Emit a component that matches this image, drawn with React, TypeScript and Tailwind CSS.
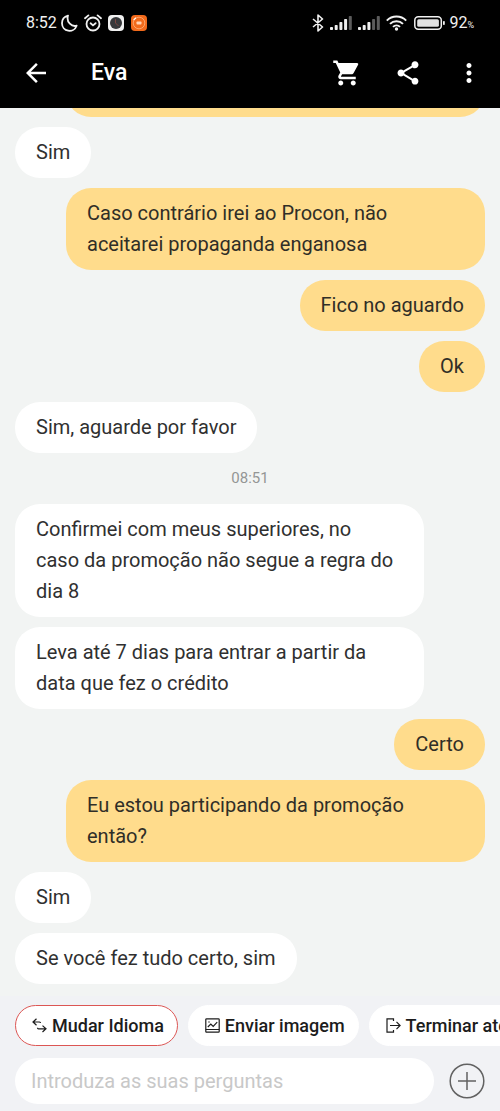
import React from "react";
import { MdArrowBack, MdMoreVert, MdShare, MdShoppingCart } from "react-icons/md";

type Message = {
  from: "me" | "agent" | "time";
  text: string;
};

const messages: Message[] = [
  { from: "agent", text: "Sim" },
  { from: "me", text: "Caso contrário irei ao Procon, não aceitarei propaganda enganosa" },
  { from: "me", text: "Fico no aguardo" },
  { from: "me", text: "Ok" },
  { from: "agent", text: "Sim, aguarde por favor" },
  { from: "time", text: "08:51" },
  { from: "agent", text: "Confirmei com meus superiores, no\ncaso da promoção não segue a regra do dia 8" },
  { from: "agent", text: "Leva até 7 dias para entrar a partir da data que fez o crédito" },
  { from: "me", text: "Certo" },
  { from: "me", text: "Eu estou participando da promoção então?" },
  { from: "agent", text: "Sim" },
  { from: "agent", text: "Se você fez tudo certo, sim" },
];

function SignalIcon({ active }: { active: number }) {
  return (
    <svg width="22" height="16" viewBox="0 0 22 16" aria-hidden="true">
      {[3, 5, 8, 11, 14].map((height, index) => (
        <rect
          key={index}
          x={index * 4.7}
          y={15 - height}
          width="3"
          height={height}
          rx="0.8"
          fill={index < active ? "#efefef" : "#5c5c5c"}
        />
      ))}
    </svg>
  );
}

function StatusBar() {
  return (
    <div className="flex items-center justify-between h-[46px] px-[26px] text-[#f1f1f1]">
      <div className="flex items-center">
        <span className="text-base">8:52</span>
        <svg className="ml-1" width="17" height="18" viewBox="0 0 17 18" fill="none" stroke="currentColor" strokeWidth="1.8" strokeLinejoin="round" aria-hidden="true">
          <path d="M7 1.6C3.500 2.500 1 5.500 1 9.200a7.500 7.500 0 0 0 14.600 2.500C11 13 5 8.500 7 1.600Z" />
        </svg>
        <svg className="ml-1.5" width="18" height="18" viewBox="0 0 18 18" fill="none" stroke="currentColor" strokeWidth="1.8" strokeLinecap="round" aria-hidden="true">
          <circle cx="9" cy="10" r="6.5" />
          <path d="M1 4.2 4.4 1.4M17 4.2l-3.400-2.800M6.600 9.300 9 11.400l2.600-2.200" />
        </svg>
        <svg className="ml-1.5" width="16" height="16" viewBox="0 0 16 16" aria-hidden="true">
          <rect width="16" height="16" rx="4" fill="#f0f0f0" />
          <circle cx="8" cy="8" r="6" fill="#36383b" />
          <path d="M7.500 4v4l3 3" fill="none" stroke="#8d4a42" strokeWidth="0.8" />
        </svg>
        <svg className="ml-[7px]" width="16" height="16" viewBox="0 0 16 16" aria-hidden="true">
          <rect width="16" height="16" rx="4" fill="#f26a1b" />
          <circle cx="8" cy="8" r="5.8" fill="none" stroke="#ffb27d" strokeWidth="0.8" />
          <path d="M2.600 5 5 2.800" stroke="#fff" strokeWidth="1.2" />
          <rect x="5.500" y="6.500" width="5" height="3" rx="0.8" fill="#ffd3b4" />
        </svg>
      </div>
      <div className="flex items-center">
        <svg width="12" height="18" viewBox="0 0 12 18" fill="none" stroke="currentColor" strokeWidth="1.6" strokeLinejoin="round" aria-hidden="true">
          <path d="M1 5l9.500 8L6 17V1l4.500 4L1 13" />
        </svg>
        <div className="flex gap-1.5 ml-1.5">
          <SignalIcon active={4} />
          <SignalIcon active={3} />
        </div>
        <svg className="ml-1.5" width="21" height="16" viewBox="0 0 21 16" fill="none" stroke="currentColor" strokeWidth="2" aria-hidden="true">
          <path d="M.8 5.600a13.800 13.800 0 0 1 19.400 0M4 8.900a9.200 9.200 0 0 1 13 0M7 11.900a5 5 0 0 1 7 0" />
          <circle cx="10.500" cy="14" r="1.700" fill="currentColor" stroke="none" />
        </svg>
        <svg className="ml-[7px]" width="31" height="14" viewBox="0 0 31 14" aria-hidden="true">
          <rect x="0.800" y="0.800" width="26.500" height="12.400" rx="3.500" fill="none" stroke="currentColor" strokeWidth="1.500" />
          <rect x="3.200" y="3.200" width="21.700" height="7.600" rx="1.500" fill="#e2e2e2" />
          <rect x="29" y="5" width="1.800" height="4" rx="0.800" fill="currentColor" />
        </svg>
        <div className="flex items-baseline ml-1">
          <span className="text-base">92</span>
          <span className="text-[9px]">%</span>
        </div>
      </div>
    </div>
  );
}

function Header() {
  return (
    <header className="relative bg-black text-white">
      <StatusBar />
      <div className="flex items-center h-[54px] mb-2 pl-[21px] pr-4">
        <button type="button" aria-label="Voltar">
          <MdArrowBack size={30} />
        </button>
        <h1 className="ml-10 text-[23px] font-medium">Eva</h1>
        <div className="flex items-center gap-8 ml-auto">
          <button type="button" aria-label="Carrinho">
            <MdShoppingCart size={30} />
          </button>
          <button type="button" aria-label="Compartilhar">
            <MdShare size={28} />
          </button>
          <button type="button" aria-label="Mais opções">
            <MdMoreVert size={30} />
          </button>
        </div>
      </div>
    </header>
  );
}

function MessageItem({ message }: { message: Message }) {
  if (message.from === "time") {
    return <time className="self-center text-[15px] leading-[31px] text-[#949695]">{message.text}</time>;
  }

  return (
    <p
      className={
        message.from === "me"
          ? "self-end max-w-[419px] px-[21px] py-2.5 rounded-[25px] bg-[#ffdc8c] text-[#302e27]"
          : "self-start max-w-[409px] px-[21px] py-2.5 rounded-[25px] bg-white text-[#303030] whitespace-pre-line"
      }
    >
      {message.text}
    </p>
  );
}

const swapIcon = (
  <svg width="15" height="15" viewBox="0 0 15 15" fill="none" stroke="currentColor" strokeWidth="1.200" aria-hidden="true">
    <path d="M4.500.8 1 4l3.500 3.200M1 4h6.500q1 0 1 1M10.500 7.600 14 10.800l-3.500 3.200M14 10.800H6.500q-1 0-1-1" />
  </svg>
);

const imageIcon = (
  <svg width="15" height="15" viewBox="0 0 15 15" fill="none" stroke="currentColor" strokeWidth="1.200" aria-hidden="true">
    <rect x="0.800" y="0.800" width="13.400" height="13.400" rx="0.800" />
    <path d="M.8 11.500h13.400M2.800 9l3-3 2.400 2.500 4-4.300" />
    <circle cx="4" cy="4" r="0.700" fill="currentColor" stroke="none" />
  </svg>
);

const exitIcon = (
  <svg width="15" height="15" viewBox="0 0 15 15" fill="none" stroke="currentColor" strokeWidth="1.200" aria-hidden="true">
    <path d="M7.500 3V.8H1v13.400h6.500V12M4 7.500h10M10.500 3.800l3.600 3.700-3.600 3.700" />
  </svg>
);

const actions = [
  { label: "Mudar Idioma", icon: swapIcon, selected: true },
  { label: "Enviar imagem", icon: imageIcon, selected: false },
  { label: "Terminar atendimento", icon: exitIcon, selected: false },
];

function Footer() {
  return (
    <footer className="pt-[9px] pb-[7px] bg-[#f1f2f5]">
      <div className="flex gap-2.5 pl-[15px] overflow-x-auto [scrollbar-width:none]">
        {actions.map((action) => (
          <button
            key={action.label}
            type="button"
            className={`flex items-center gap-[5px] shrink-0 h-[41px] pl-4 pr-[13px] border rounded-full bg-white text-lg font-medium text-[#1c1c1c] whitespace-nowrap ${
              action.selected ? "border-[#dc5654]" : "border-white"
            }`}
          >
            {action.icon}
            {action.label}
          </button>
        ))}
      </div>
      <div className="flex items-center gap-[15px] mt-3 px-[15px]">
        <input
          type="text"
          aria-label="Introduza as suas perguntas"
          placeholder="Introduza as suas perguntas"
          className="flex-1 min-w-0 h-[46px] px-4 rounded-full bg-white text-xl text-[#303030] placeholder:text-[#c8c8c8] outline-none"
        />
        <button type="button" aria-label="Adicionar">
          <svg width="36" height="36" viewBox="0 0 36 36" fill="none" stroke="#626262" strokeWidth="1.500" aria-hidden="true">
            <circle cx="18" cy="18" r="16.800" />
            <path d="M18 9v18M9 18h18" />
          </svg>
        </button>
      </div>
    </footer>
  );
}

export default function App() {
  return (
    <div className="flex flex-col min-h-screen bg-[#f2f4f3] font-[Roboto,sans-serif]">
      <Header />
      <main className="flex-1 overflow-hidden">
        <div className="flex flex-col gap-2.5 -mt-[73px] px-[15px] pb-2.5 text-xl leading-[31px]">
          {/* older message, scrolled under the header */}
          <div className="self-end w-full max-w-[419px] h-[82px] rounded-[25px] bg-[#ffdc8c]" />
          {messages.map((message, index) => (
            <MessageItem key={index} message={message} />
          ))}
        </div>
      </main>
      <Footer />
    </div>
  );
}
